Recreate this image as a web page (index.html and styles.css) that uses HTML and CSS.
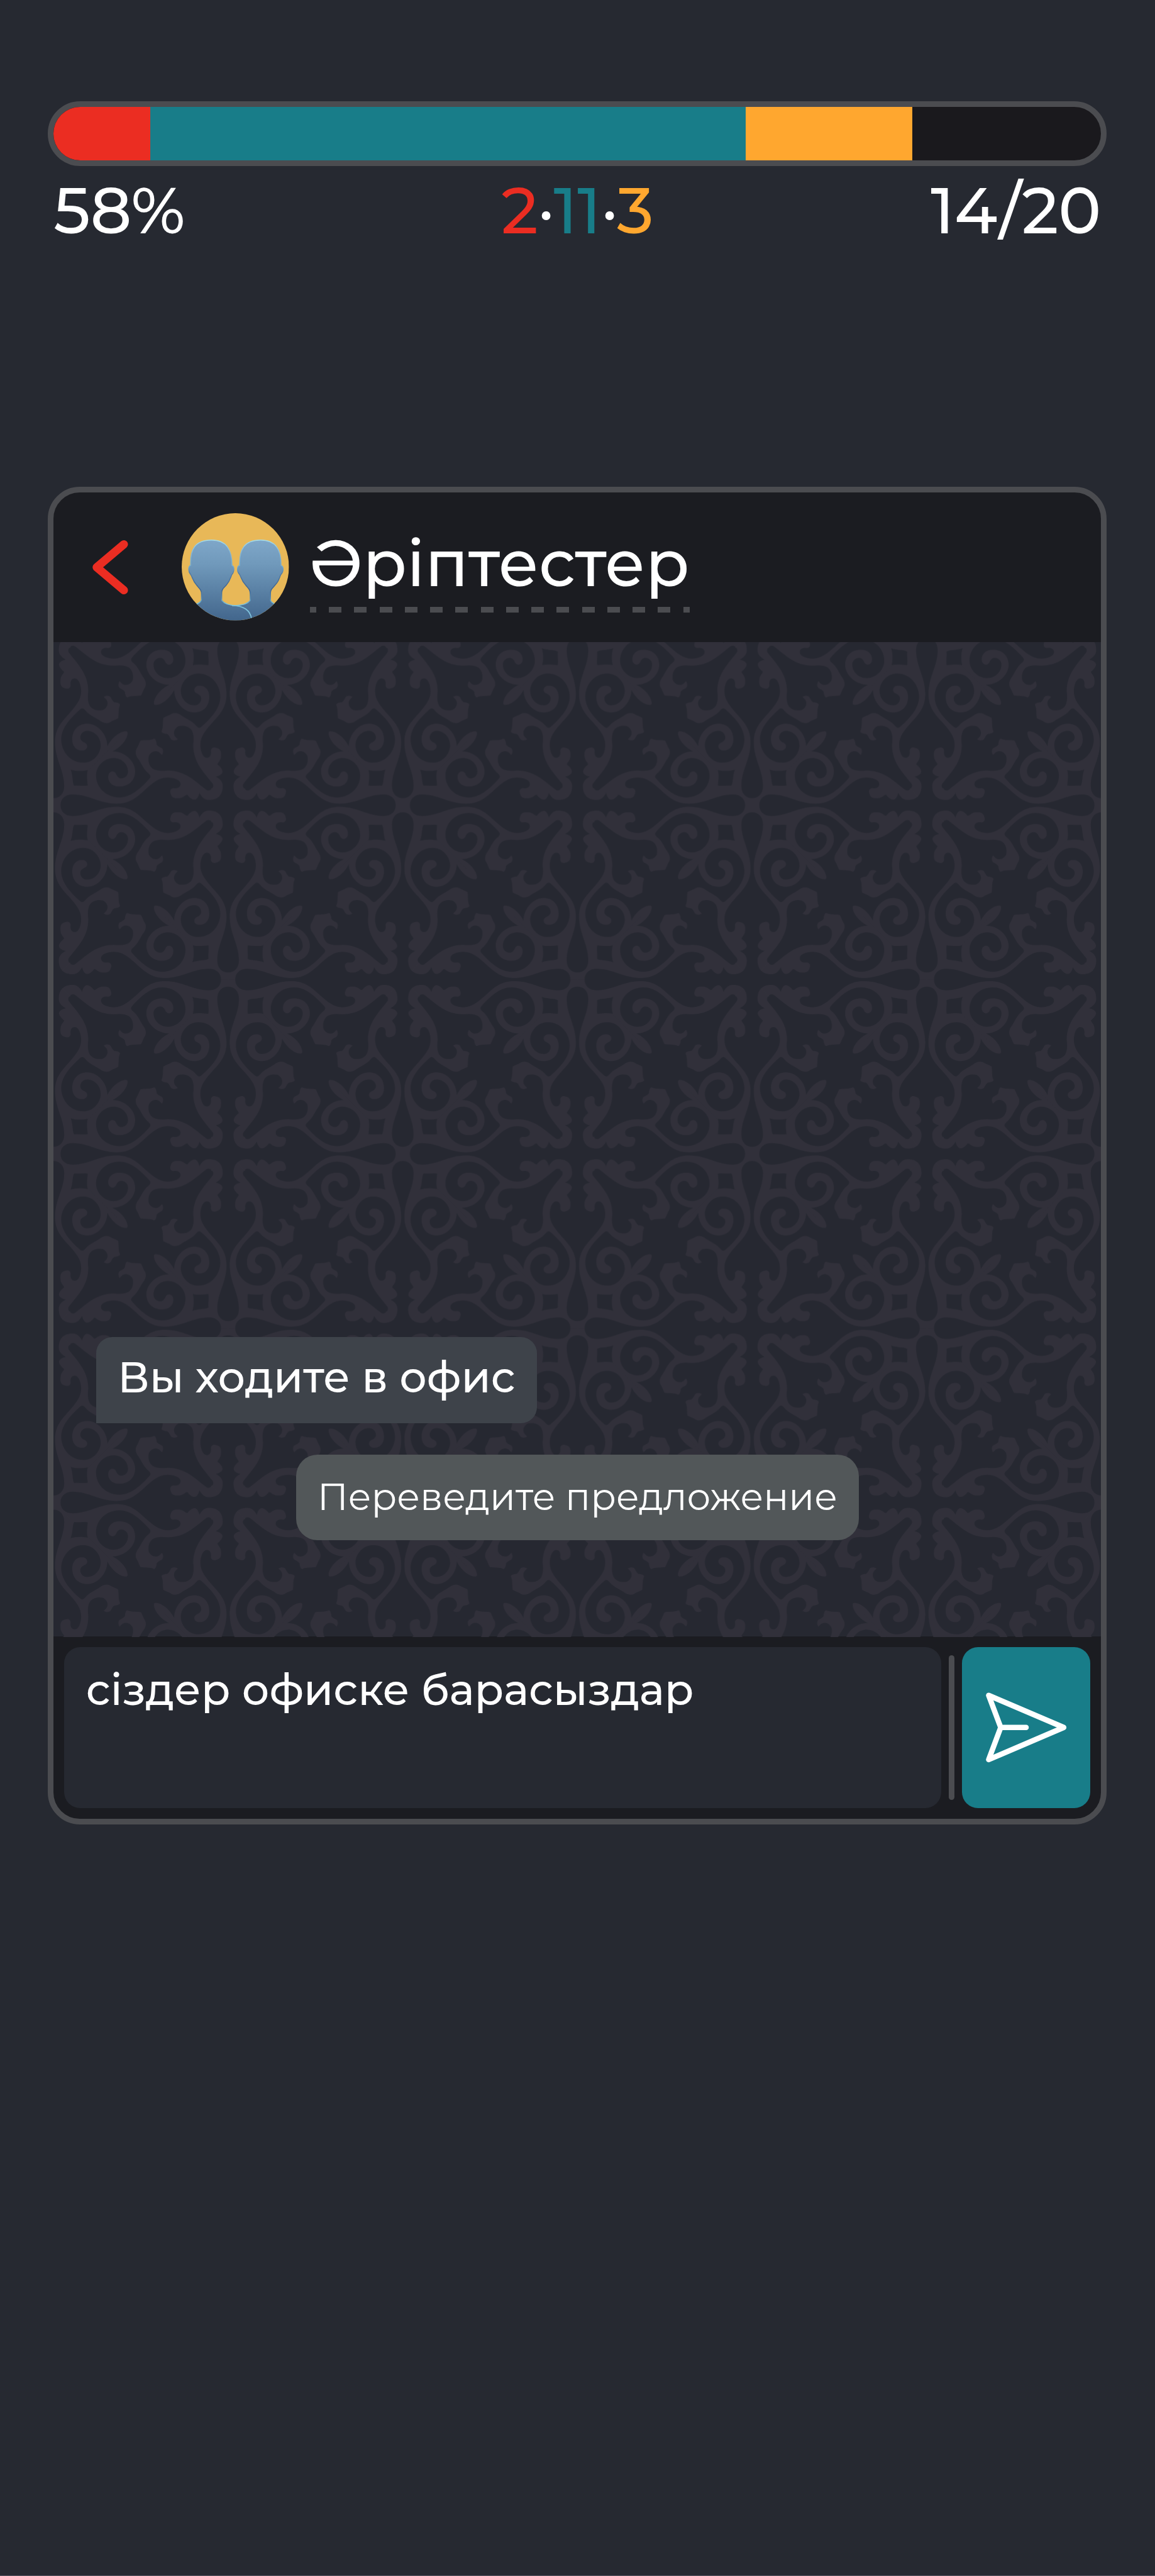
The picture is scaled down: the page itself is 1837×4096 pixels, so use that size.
FILE: index.html
```html
<!DOCTYPE html>
<html lang="kk">
<head>
<meta charset="utf-8">
<title>Әріптестер</title>
<link rel="stylesheet" href="styles.css">
</head>
<body>
<section class="progress">
  <div class="bar">
    <div class="bar-part wrong" style="width:153.4px"></div>
    <div class="bar-part right" style="width:946.9px"></div>
    <div class="bar-part hint" style="width:265.2px"></div>
  </div>
  <div class="stats">
    <span>58%</span>
    <span class="counts"><span class="c-wrong">2</span>·<span class="c-right">11</span>·<span class="c-hint">3</span></span>
    <span class="total">14/20</span>
  </div>
</section>

<main class="chat">
  <header class="chat-head">
    <svg class="back" viewBox="0 0 57 88" fill="none"><path d="M50 7.5 L6.8 44 L50 80.5" stroke="#eb2d22" stroke-width="13.1" stroke-linecap="round" stroke-linejoin="round"/></svg>
    <svg class="avatar" viewBox="0 0 209 209">
      <defs>
        <clipPath id="round"><circle cx="104.5" cy="104.5" r="104.5"/></clipPath>
        <linearGradient id="skin" gradientUnits="userSpaceOnUse" x1="0" y1="52" x2="0" y2="209"><stop offset="0" stop-color="#7fa7c9"/><stop offset=".3" stop-color="#7099bb"/><stop offset="1" stop-color="#42668c"/></linearGradient>
        <linearGradient id="rim" gradientUnits="userSpaceOnUse" x1="0" y1="52" x2="0" y2="182"><stop offset="0" stop-color="#a4dcea"/><stop offset=".2" stop-color="#86b6d4"/><stop offset=".4" stop-color="#74acd0"/><stop offset=".5" stop-color="#517ba5"/><stop offset=".75" stop-color="#3c6290"/><stop offset=".88" stop-color="#5c90b4"/><stop offset=".96" stop-color="#7cc4dc"/><stop offset="1" stop-color="#7cc4dc"/></linearGradient>
      </defs>
      <g clip-path="url(#round)">
        <rect width="209" height="209" fill="#e8b858"/>
        <path fill="url(#skin)" stroke="url(#rim)" stroke-width="1.8" stroke-linejoin="round" d="M-5 205 L22 180 C30 176 37 175 38.500 169 L38.500 158 C38.500 148 34 147 29 140 C21 131 21 124 17 119 C12 113 13 102 17.500 102 C16 70 26 52.500 58 52.500 C88 52.500 98 72 98 102 C103 103 103 114 97.500 120 C95 126 94 132 87 140 C81 147 78 147 78 157 L78 170 C84 177 94 179.500 105 180 C116 179.500 127 178 133.500 170 L133.500 158 C133.500 148 130 147 124.500 140 C116 131 116 124 112.500 119 C107 113 108 102 113 102 C112 70 122 52.500 153.500 52.500 C184 52.500 194 72 193.500 102 C199 103 199 114 193 120 C190 126 190 132 182 140 C177 147 173 147 173 157 L173 170 C175 175 180 175 187 180 L215 205 L215 215 L-5 215 Z"/>
        <path d="M98 180 C120 180 134 189 136 206" fill="none" stroke="#7fc3dc" stroke-width="2.200"/>
      </g>
    </svg>
    <h1 class="chat-title">Әріптестер</h1>
  </header>

  <div class="feed">
    <svg class="ornament" width="1667" height="1582" viewBox="0 0 1667 1582">
      <defs>
        <g id="scroll">
          <path fill="#31303a" d="M742 -2 V30 C716 30 696 48 696 82 C696 150 735 195 735 268 C735 322 712 350 677 388 C647 422 624 448 624 485 C624 510 634 540 651 540 C669 540 671 522 669 510 C671 496 682 494 692 498 C709 502 715 512 711 540 C707 556 696 562 697 569 C708 577 719 590 718 600 C717 610 702 618 689 620 C707 630 719 642 719 660 C719 682 713 695 703 705 L670 672 C680 670 682 656 675 648 C640 602 594 560 594 485 C597 460 597 440 587 422 C572 402 547 402 532 405 C512 415 507 435 517 450 L528 461 C517 468 505 467 499 460 C492 447 487 436 477 438 C462 434 458 432 460 425 C467 410 464 390 467 370 C477 364 492 360 502 353 C516 346 532 350 547 362 C567 375 589 384 602 399 C612 411 619 417 629 408 C677 365 709 325 709 280 C709 230 672 181 615 181 C572 181 541 220 541 255 C541 290 567 317 599 317 C617 317 628 302 628 288 C628 275 615 268 607 265 C595 258 595 240 612 234 C642 228 662 250 662 280 C662 320 637 347 597 347 C557 347 513 305 513 250 C498 282 464 314 435 315 C426 314 428 308 431 303 L472 270 L600 142 L720 20 Z"/>
        </g>
        <g id="pair">
          <use href="#scroll"/>
          <use href="#scroll" transform="matrix(0 -1 -1 0 742 742)"/>
          <path fill="#262831" d="M596 84 C616 80 636 86 653 83 C662 90 659 130 669 152 C645 144 615 145 596 150 C602 128 598 106 596 84 Z"/>
        </g>
        <g id="quarter">
          <use href="#pair"/>
          <use href="#pair" transform="matrix(0 1 1 0 0 0)"/>
          <path fill="none" stroke="#31303a" stroke-width="2" d="M672 672 L703 703 M70 70 L39 39"/>
        </g>
        <pattern id="tile" width="1484" height="1484" patternUnits="userSpaceOnUse" patternTransform="translate(277.8 259.4) scale(.37446 .37356)">
          <use href="#quarter"/>
          <use href="#quarter" transform="matrix(-1 0 0 1 1484 0)"/>
          <use href="#quarter" transform="matrix(1 0 0 -1 0 1484)"/>
          <use href="#quarter" transform="matrix(-1 0 0 -1 1484 1484)"/>
        </pattern>
      </defs>
      <rect width="1667" height="1582" fill="url(#tile)"/>
    </svg>
    <p class="bubble incoming">Вы ходите в офис</p>
    <p class="bubble notice">Переведите предложение</p>
  </div>

  <footer class="composer">
    <div class="field">сіздер офиске барасыздар</div>
    <div class="divider"></div>
    <div class="send">
      <svg viewBox="0 0 250 313" fill="none" stroke="#fff" stroke-width="10.400" stroke-linecap="round" stroke-linejoin="round"><path d="M52 94 L198.300 156.500 L52 219.200 L75.500 156.500 Z M75.500 156.500 H125"/></svg>
    </div>
  </footer>
</main>
</body>
</html>
```
FILE: styles.css
```css
* { box-sizing: border-box; }

body {
  margin: 0;
  height: 4096px;
  padding: 161px 76.600px 0 76.300px;
  overflow: hidden;
  background: #262931;
  border-bottom: 1px solid #595562;
  color: #fff;
  font-family: "Montserrat", "Inter", sans-serif;
  font-weight: 500;
}

h1, p { margin: 0; font: inherit; }

.bar {
  display: flex;
  height: 103px;
  border: 9px solid #4b4c50;
  border-radius: 52px;
  overflow: hidden;
  background: #1a191d;
}
.bar-part { flex: none; height: 100%; }
.wrong { background: #eb2d22; }
.right { background: #187d89; }
.hint { background: #ffa72f; }

.stats {
  display: grid;
  grid-template-columns: 1fr auto 1fr;
  padding: 0 9px;
  font-size: 102px;
  line-height: 141px;
  white-space: nowrap;
}
.total { text-align: right; }
.c-wrong { color: #eb2d22; }
.c-right { color: #187d89; }
.c-hint { color: #ffa72f; }

.chat {
  display: flex;
  flex-direction: column;
  height: 2127px;
  margin-top: 368.500px;
  border: 9px solid #4b4c50;
  border-radius: 51px;
  overflow: hidden;
  background: #1b1c21;
}

.chat-head {
  display: flex;
  flex: none;
  align-items: center;
  height: 238px;
  padding-left: 61.500px;
}
.back { width: 57px; height: 88px; }
.avatar { width: 170.600px; height: 170.600px; margin-left: 85.400px; }
.chat-title {
  align-self: flex-start;
  height: 129.300px;
  margin: 62.400px 0 0 33.200px;
  font-size: 102px;
  line-height: 101px;
  background: repeating-linear-gradient(90deg, #4b4c50 0 10px, transparent 10px 30.200px, #4b4c50 30.200px 40.240px) 0 100% / 100% 9px no-repeat;
}

.feed {
  position: relative;
  display: flex;
  flex: none;
  flex-direction: column;
  justify-content: flex-end;
  height: 1581.700px;
  padding: 0 67.600px 152.900px;
  gap: 50.500px;
  background: #262831;
}
.ornament { position: absolute; left: 0; top: 0; }

.bubble {
  position: relative;
  height: 136.300px;
  padding: 0 34px;
  white-space: nowrap;
}
.incoming {
  align-self: flex-start;
  border-radius: 25.500px 25.500px 25.500px 0;
  background: #3e434a;
  font-size: 68px;
  line-height: 127.600px;
}
.notice {
  align-self: center;
  border-radius: 34px;
  background: #525759;
  font-size: 59.500px;
  font-weight: 400;
  line-height: 133.800px;
}

.composer {
  display: flex;
  flex: 1;
  align-items: center;
  gap: 12.500px;
  padding: 0 17px;
}
.field {
  flex: 1;
  height: 255.500px;
  padding: 0 34.500px;
  border-radius: 25.500px;
  background: #262931;
  font-size: 68px;
  line-height: 136px;
}
.divider {
  width: 8.700px;
  height: 230px;
  border-radius: 5px;
  background: #4b4c50;
}
.send {
  width: 204.100px;
  height: 255.500px;
  border-radius: 25.500px;
  background: #187d89;
}
.send svg { display: block; width: 100%; height: 100%; }
```
